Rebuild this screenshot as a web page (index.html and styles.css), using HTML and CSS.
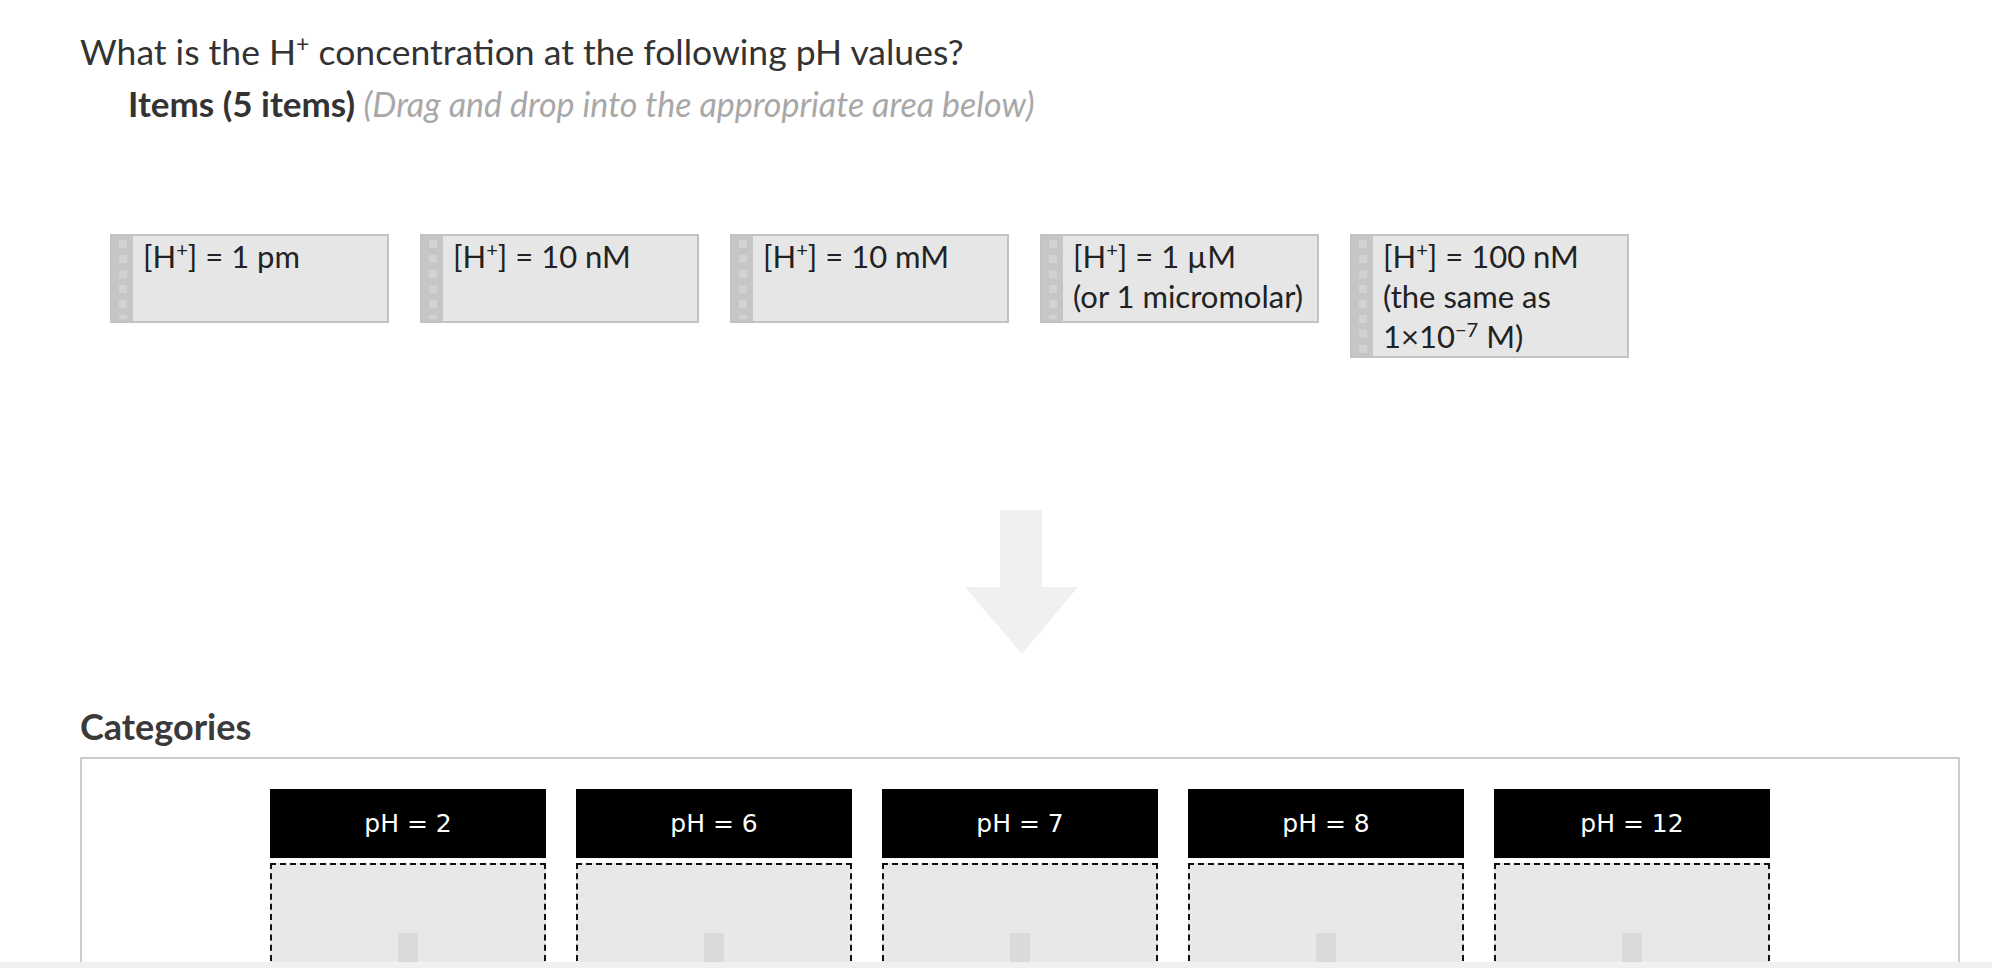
FILE: index.html
```html
<!DOCTYPE html>
<html lang="en">
<head>
<meta charset="utf-8">
<title>H+ concentration</title>
<link rel="stylesheet" href="styles.css">
</head>
<body>
<div class="page">
  <h1 class="question">What is the H<sup>+</sup> concentration at the following pH values?</h1>
  <h2 class="items-heading">Items (5 items) <span class="hint">(Drag and drop into the appropriate area below)</span></h2>
  <ul class="items">
    <li class="item"><span class="grip"></span><span class="item-text">[H<sup>+</sup>] = 1 pm</span></li>
    <li class="item"><span class="grip"></span><span class="item-text">[H<sup>+</sup>] = 10 nM</span></li>
    <li class="item"><span class="grip"></span><span class="item-text">[H<sup>+</sup>] = 10 mM</span></li>
    <li class="item"><span class="grip"></span><span class="item-text">[H<sup>+</sup>] = 1 µM<br><span class="nowrap">(or 1 micromolar)</span></span></li>
    <li class="item"><span class="grip"></span><span class="item-text">[H<sup>+</sup>] = 100 nM<br>(the same as<br>1×10<sup>−7</sup> M)</span></li>
  </ul>
  <div class="arrow-row">
    <svg class="arrow" width="113" height="144" viewBox="0 0 113 144" aria-hidden="true">
      <polygon points="35,0 77,0 77,77 113,77 57,144 0,77 35,77" fill="#f0f0f0"/>
    </svg>
  </div>
  <h2 class="categories-heading">Categories</h2>
  <div class="categories">
    <div class="category"><div class="cat-head">pH = 2</div><div class="drop"><span class="drop-mark"></span></div></div>
    <div class="category"><div class="cat-head">pH = 6</div><div class="drop"><span class="drop-mark"></span></div></div>
    <div class="category"><div class="cat-head">pH = 7</div><div class="drop"><span class="drop-mark"></span></div></div>
    <div class="category"><div class="cat-head">pH = 8</div><div class="drop"><span class="drop-mark"></span></div></div>
    <div class="category"><div class="cat-head">pH = 12</div><div class="drop"><span class="drop-mark"></span></div></div>
  </div>
</div>
<div class="bottom-bar"></div>
</body>
</html>
```
FILE: styles.css
```css
html, body {
  margin: 0;
  padding: 0;
  background: #ffffff;
}

body {
  font-family: Lato, "Liberation Sans", sans-serif;
  color: #333333;
  overflow: hidden;
  height: 968px;
}

.page {
  padding: 32px 32px 0 80px;
}

.question {
  margin: 0;
  font-size: 35.5px;
  line-height: 40px;
  font-weight: 400;
  color: #333333;
}

.question sup {
  font-size: 0.65em;
  line-height: 0;
  vertical-align: 0.55em;
}

.items-heading {
  margin: 11px 0 0 48px;
  font-size: 35px;
  line-height: 40px;
  font-weight: 700;
  color: #333333;
}

.hint {
  font-weight: 400;
  font-style: italic;
  color: #a8a8a8;
  font-size: 34px;
}

.items {
  list-style: none;
  margin: 110px 0 0 30px;
  padding: 0;
  display: flex;
  align-items: flex-start;
  gap: 31px;
}

.item {
  box-sizing: border-box;
  width: 279px;
  min-height: 89px;
  display: flex;
  align-items: stretch;
  background: #e6e6e6;
  border: 2px solid #c2c2c2;
}

.grip {
  flex: 0 0 21px;
  background-color: #c6c6c6;
  background-image: repeating-linear-gradient(to bottom, #d2d2d2 0 8px, transparent 8px 15px);
  background-size: 8px calc(100% - 6px);
  background-position: 7px 4px;
  background-repeat: no-repeat;
}

.item-text {
  padding: 0 0 0 10px;
  font-size: 31px;
  line-height: 40px;
  color: #222222;
}

.nowrap {
  white-space: nowrap;
}

.item-text sup {
  font-size: 0.65em;
  line-height: 0;
  vertical-align: 0.55em;
}

.arrow-row {
  display: flex;
  justify-content: center;
  margin-top: 152px;
  padding-left: 3px;
}

.arrow {
  display: block;
}

.categories-heading {
  margin: 52px 0 0 0;
  font-size: 36px;
  line-height: 40px;
  font-weight: 700;
  color: #3a3a3a;
}

.categories {
  margin-top: 11px;
  border: 2px solid #cccccc;
  border-bottom: none;
  padding-top: 30px;
  display: flex;
  justify-content: center;
  gap: 30px;
  height: 300px;
}

.category {
  width: 276px;
  display: flex;
  flex-direction: column;
  gap: 5px;
}

.cat-head {
  height: 69px;
  background: #000000;
  color: #ffffff;
  font-family: "DejaVu Sans", sans-serif;
  font-size: 25px;
  display: flex;
  align-items: center;
  justify-content: center;
}

.drop {
  height: 200px;
  box-sizing: border-box;
  border: 2px dashed #111111;
  background: #e8e8e8;
  display: flex;
  justify-content: center;
  padding-top: 68px;
}

.drop-mark {
  width: 20px;
  height: 40px;
  background: #dadada;
}

.bottom-bar {
  position: fixed;
  left: 0;
  right: 0;
  bottom: 0;
  height: 6px;
  background: #f0f0f0;
}
```
